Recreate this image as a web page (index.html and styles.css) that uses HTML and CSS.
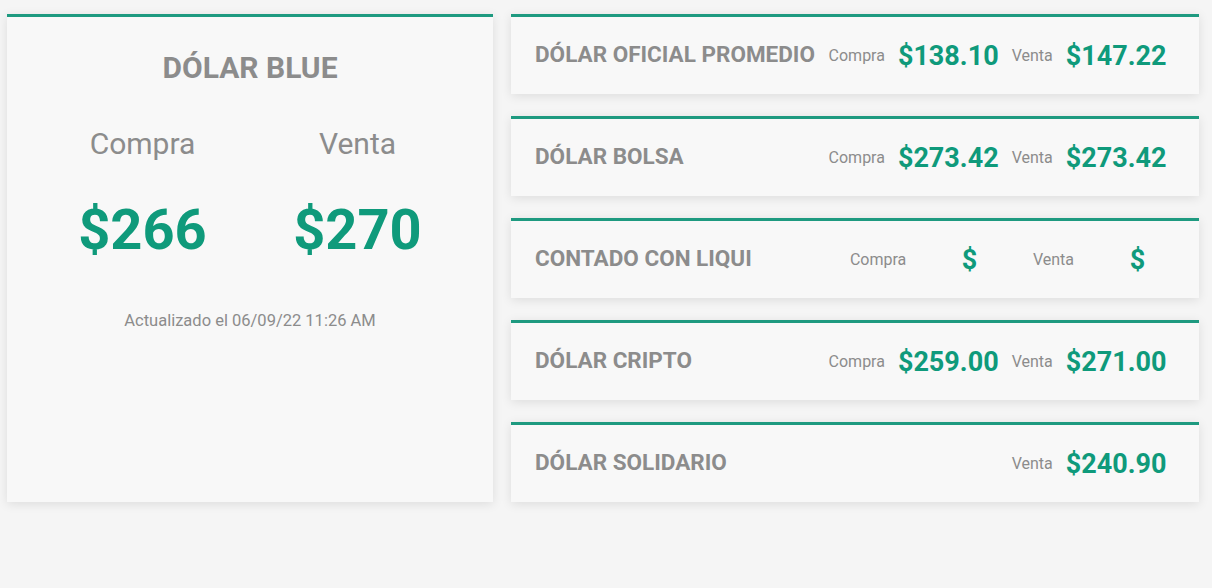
FILE: index.html
```html
<!DOCTYPE html>
<html lang="es">
<head>
    <meta charset="UTF-8">
    <meta name="viewport" content="width=device-width, initial-scale=1.0">
    <title>Cotizaciones del dólar</title>
    <link rel="stylesheet" href="styles.css">
</head>
<body>
    <div class="layout">
        <div class="card principal">
            <h2 class="principal-titulo">DÓLAR BLUE</h2>
            <div class="principal-precios">
                <div class="columna">
                    <span class="principal-label">Compra</span>
                    <span class="principal-valor">$266</span>
                </div>
                <div class="columna">
                    <span class="principal-label">Venta</span>
                    <span class="principal-valor">$270</span>
                </div>
            </div>
            <p class="actualizado">Actualizado el 06/09/22 11:26 AM</p>
        </div>

        <div class="lista">
            <div class="card fila">
                <h3 class="fila-titulo">DÓLAR OFICIAL PROMEDIO</h3>
                <div class="fila-precios">
                    <span class="fila-label">Compra</span>
                    <span class="fila-valor">$138.10</span>
                    <span class="fila-label">Venta</span>
                    <span class="fila-valor">$147.22</span>
                </div>
            </div>
            <div class="card fila">
                <h3 class="fila-titulo">DÓLAR BOLSA</h3>
                <div class="fila-precios">
                    <span class="fila-label">Compra</span>
                    <span class="fila-valor">$273.42</span>
                    <span class="fila-label">Venta</span>
                    <span class="fila-valor">$273.42</span>
                </div>
            </div>
            <div class="card fila">
                <h3 class="fila-titulo">CONTADO CON LIQUI</h3>
                <div class="fila-precios">
                    <span class="fila-label">Compra</span>
                    <span class="fila-valor">$</span>
                    <span class="fila-label">Venta</span>
                    <span class="fila-valor">$</span>
                </div>
            </div>
            <div class="card fila">
                <h3 class="fila-titulo">DÓLAR CRIPTO</h3>
                <div class="fila-precios">
                    <span class="fila-label">Compra</span>
                    <span class="fila-valor">$259.00</span>
                    <span class="fila-label">Venta</span>
                    <span class="fila-valor">$271.00</span>
                </div>
            </div>
            <div class="card fila">
                <h3 class="fila-titulo">DÓLAR SOLIDARIO</h3>
                <div class="fila-precios">
                    <span class="fila-label oculto">Compra</span>
                    <span class="fila-valor oculto">$240.90</span>
                    <span class="fila-label">Venta</span>
                    <span class="fila-valor">$240.90</span>
                </div>
            </div>
        </div>
    </div>
</body>
</html>
```

FILE: styles.css
```css
body {
    font-family: 'Roboto', sans-serif;
    background-color: #f5f5f5;
    margin: 0;
    padding: 14px 13px 40px 7px;
    color: #8c8c8c;
}

.layout {
    display: flex;
    gap: 18px;
}

.card {
    background-color: #f8f8f8;
    border-top: 3px solid #1e9a80;
    box-shadow: 0 2px 10px rgba(0, 0, 0, 0.1);
    box-sizing: border-box;
}

/* tarjeta grande */
.principal {
    width: 486px;
    height: 488px;
    padding: 33px 28px 0;
    text-align: center;
}

.principal-titulo {
    margin: 0;
    font-size: 30px;
    font-weight: 700;
    line-height: 36px;
}

.principal-precios {
    display: flex;
    margin-top: 40px;
}

.columna {
    flex: 1;
    display: flex;
    flex-direction: column;
    align-items: center;
}

.principal-label {
    font-size: 30px;
    line-height: 36px;
}

.principal-valor {
    margin-top: 35px;
    font-size: 56px;
    font-weight: 700;
    line-height: 66px;
    color: #0f9a7b;
}

.actualizado {
    margin: 48px 0 0;
    font-size: 16.5px;
    line-height: 20px;
}

/* filas de la derecha */
.lista {
    flex: 1;
    display: flex;
    flex-direction: column;
    gap: 22px;
}

.fila {
    height: 80px;
    display: flex;
    align-items: center;
    padding: 0 26px 0 24px;
}

.fila-titulo {
    width: 45%;
    margin: 0 0 3px;
    font-size: 22.5px;
    font-weight: 700;
    white-space: nowrap;
}

.fila-precios {
    width: 55%;
    display: flex;
    align-items: center;
    justify-content: space-around;
}

.fila-label {
    font-size: 16px;
}

.fila-valor {
    font-size: 27px;
    font-weight: 700;
    color: #0f9a7b;
}

.oculto {
    visibility: hidden;
}
```
